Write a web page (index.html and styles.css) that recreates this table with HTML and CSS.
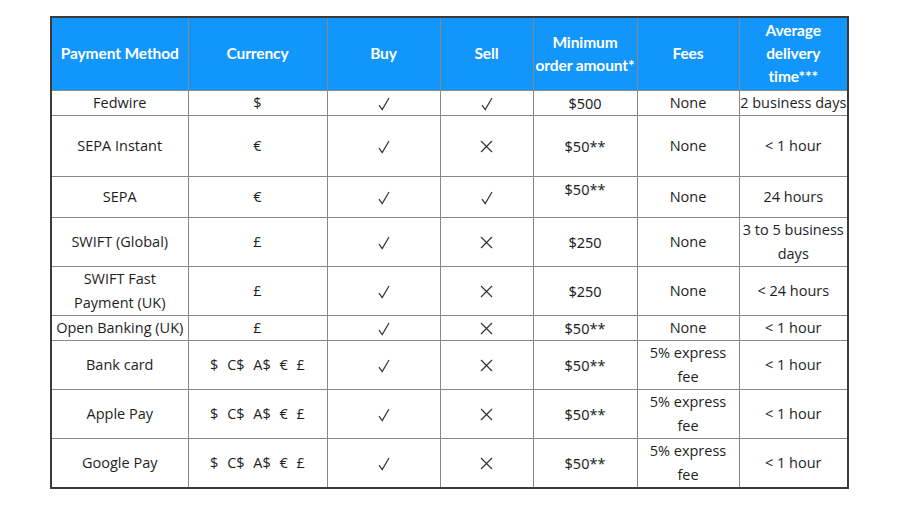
FILE: index.html
```html
<!DOCTYPE html>
<html>
<head>
<meta charset="utf-8">
<link rel="stylesheet" href="styles.css">
</head>
<body>
<div class="page">
<table class="pay">
  <colgroup>
    <col class="c1"><col class="c2"><col class="c3"><col class="c4"><col class="c5"><col class="c6"><col class="c7">
  </colgroup>
  <thead>
    <tr class="h">
      <th>Payment Method</th>
      <th>Currency</th>
      <th>Buy</th>
      <th>Sell</th>
      <th>Minimum<br>order amount*</th>
      <th>Fees</th>
      <th>Average<br>delivery<br>time***</th>
    </tr>
  </thead>
  <tbody>
    <tr class="r25">
      <td>Fedwire</td><td>$</td>
      <td><svg class="ck" viewBox="0 0 12 14"><path d="M1 8.2 L4.2 12.6 L11 1"/></svg></td>
      <td><svg class="ck" viewBox="0 0 12 14"><path d="M1 8.2 L4.2 12.6 L11 1"/></svg></td>
      <td class="amt">$500</td><td>None</td><td>2 business days</td>
    </tr>
    <tr class="r61">
      <td>SEPA Instant</td><td>€</td>
      <td><svg class="ck" viewBox="0 0 12 14"><path d="M1 8.2 L4.2 12.6 L11 1"/></svg></td>
      <td><svg class="x" viewBox="0 0 13 13"><path d="M1 1 L12 12 M12 1 L1 12"/></svg></td>
      <td class="amt">$50**</td><td>None</td><td>&lt; 1 hour</td>
    </tr>
    <tr class="r41">
      <td>SEPA</td><td>€</td>
      <td><svg class="ck" viewBox="0 0 12 14"><path d="M1 8.2 L4.2 12.6 L11 1"/></svg></td>
      <td><svg class="ck" viewBox="0 0 12 14"><path d="M1 8.2 L4.2 12.6 L11 1"/></svg></td>
      <td class="amt top">$50**</td><td>None</td><td>24 hours</td>
    </tr>
    <tr class="r49">
      <td>SWIFT (Global)</td><td>£</td>
      <td><svg class="ck" viewBox="0 0 12 14"><path d="M1 8.2 L4.2 12.6 L11 1"/></svg></td>
      <td><svg class="x" viewBox="0 0 13 13"><path d="M1 1 L12 12 M12 1 L1 12"/></svg></td>
      <td class="amt">$250</td><td>None</td><td>3 to 5 business days</td>
    </tr>
    <tr class="r49">
      <td>SWIFT Fast<br>Payment (UK)</td><td>£</td>
      <td><svg class="ck" viewBox="0 0 12 14"><path d="M1 8.2 L4.2 12.6 L11 1"/></svg></td>
      <td><svg class="x" viewBox="0 0 13 13"><path d="M1 1 L12 12 M12 1 L1 12"/></svg></td>
      <td class="amt">$250</td><td>None</td><td>&lt; 24 hours</td>
    </tr>
    <tr class="r25">
      <td>Open Banking (UK)</td><td>£</td>
      <td><svg class="ck" viewBox="0 0 12 14"><path d="M1 8.2 L4.2 12.6 L11 1"/></svg></td>
      <td><svg class="x" viewBox="0 0 13 13"><path d="M1 1 L12 12 M12 1 L1 12"/></svg></td>
      <td class="amt">$50**</td><td>None</td><td>&lt; 1 hour</td>
    </tr>
    <tr class="r49">
      <td>Bank card</td><td class="cur">$ C$ A$ € £</td>
      <td><svg class="ck" viewBox="0 0 12 14"><path d="M1 8.2 L4.2 12.6 L11 1"/></svg></td>
      <td><svg class="x" viewBox="0 0 13 13"><path d="M1 1 L12 12 M12 1 L1 12"/></svg></td>
      <td class="amt">$50**</td><td>5% express<br>fee</td><td>&lt; 1 hour</td>
    </tr>
    <tr class="r49">
      <td>Apple Pay</td><td class="cur">$ C$ A$ € £</td>
      <td><svg class="ck" viewBox="0 0 12 14"><path d="M1 8.2 L4.2 12.6 L11 1"/></svg></td>
      <td><svg class="x" viewBox="0 0 13 13"><path d="M1 1 L12 12 M12 1 L1 12"/></svg></td>
      <td class="amt">$50**</td><td>5% express<br>fee</td><td>&lt; 1 hour</td>
    </tr>
    <tr class="r49">
      <td>Google Pay</td><td class="cur">$ C$ A$ € £</td>
      <td><svg class="ck" viewBox="0 0 12 14"><path d="M1 8.2 L4.2 12.6 L11 1"/></svg></td>
      <td><svg class="x" viewBox="0 0 13 13"><path d="M1 1 L12 12 M12 1 L1 12"/></svg></td>
      <td class="amt">$50**</td><td>5% express<br>fee</td><td>&lt; 1 hour</td>
    </tr>
  </tbody>
</table>
</div>
</body>
</html>
```

FILE: styles.css
```css
html, body {
  margin: 0;
  padding: 0;
  background: #fff;
}
.page {
  padding: 16px 0 0 50px;
}
.pay {
  border-collapse: collapse;
  table-layout: fixed;
  width: 799px;
  border: 2px solid #3a3a3a;
  font-family: "Open Sans", "Lato", sans-serif;
  font-size: 14.5px;
  line-height: 24px;
  color: #1e1e1e;
}
.c1 { width: 137px; }
.c2 { width: 139px; }
.c3 { width: 113px; }
.c4 { width: 93px; }
.c5 { width: 104px; }
.c6 { width: 102px; }
.c7 { width: 109px; }
.pay th, .pay td {
  border: 1px solid #888;
  padding: 0;
  text-align: center;
  vertical-align: middle;
}
.pay th {
  background: #1396fc;
  color: #fff;
  font-family: "Lato", sans-serif;
  font-weight: 700;
  font-size: 15.5px;
  line-height: 23px;
  letter-spacing: -0.1px;
}
.h { height: 73px; }
.r25 { height: 25px; }
.r41 { height: 41px; }
.r49 { height: 49px; }
.r61 { height: 61px; }
.pay td.top { vertical-align: top; }
.amt {
  font-family: "Noto Sans", "Open Sans", sans-serif;
  font-size: 14.5px;
}
.cur { word-spacing: 5px; }
.ck, .x {
  display: inline-block;
  vertical-align: middle;
  fill: none;
  stroke: #333;
  stroke-width: 1.2;
}
.ck { width: 12px; height: 14px; }
.x { width: 13px; height: 13px; }
```
